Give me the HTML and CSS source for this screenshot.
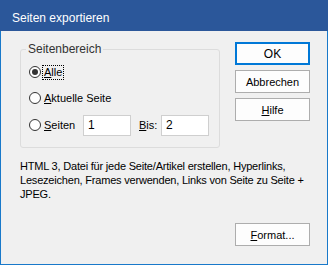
FILE: index.html
```html
<!DOCTYPE html>
<html lang="de">
<head>
  <meta charset="UTF-8" />
  <meta name="viewport" content="width=device-width, initial-scale=1" />
  <title>Seiten exportieren</title>
  <link rel="stylesheet" href="styles.css">
</head>
<body>

  <div class="window">
    <div class="titlebar">Seiten exportieren</div>

    <div class="content">
      <div class="top">
        <fieldset class="range">
          <legend>Seitenbereich</legend>
          <div class="rows">
            <label class="row">
              <span class="radio checked"></span>
              <span class="focus"><u>A</u>lle</span>
            </label>
            <label class="row">
              <span class="radio"></span>
              <span class="text"><u>A</u>ktuelle Seite</span>
            </label>
            <div class="row pages">
              <label class="pages-label">
                <span class="radio"></span>
                <span class="text"><u>S</u>eiten</span>
              </label>
              <input type="text" class="field" value="1">
              <span class="bis"><u>B</u>is:</span>
              <input type="text" class="field" value="2">
            </div>
          </div>
        </fieldset>

        <div class="buttons">
          <button class="default">OK</button>
          <button>Abbrechen</button>
          <button><u>H</u>ilfe</button>
        </div>
      </div>

      <p class="desc">HTML 3, Datei für jede Seite/Artikel erstellen, Hyperlinks, Lesezeichen, Frames verwenden, Links von Seite zu Seite + JPEG.</p>

      <div class="footer">
        <button><u>F</u>ormat...</button>
      </div>
    </div>
  </div>

</body>
</html>
```

FILE: styles.css
```css
* {
  box-sizing: border-box;
}
body {
  margin: 0;
  font-family: "Liberation Sans", Arial, sans-serif;
  font-size: 11px;
  color: #000;
  background: #f0f0f0;
}
.window {
  width: 328px;
  height: 265px;
  display: flex;
  flex-direction: column;
  background: #f0f0f0;
  border: 1px solid #1979ca;
  border-top: none;
}
.titlebar {
  height: 31px;
  margin: 0 -1px;
  padding: 6px 0 0 12px;
  line-height: 25px;
  font-size: 12px;
  background: #2b579a;
  color: #fff;
}
.content {
  flex: 1;
  display: flex;
  flex-direction: column;
  padding: 11px 17px 18px 19px;
}
.top {
  display: flex;
  gap: 15px;
}
.range {
  width: 200px;
  min-width: 0;
  margin: 0;
  padding: 0;
  border: 1px solid #dcdcdc;
  border-radius: 3px;
}
.range legend {
  margin-left: 5px;
  padding: 0 2px;
  line-height: 14px;
  font-size: 12px;
  color: #333;
}
.rows {
  padding: 3px 0 8px 8px;
}
.row {
  display: flex;
  align-items: center;
  height: 26px;
}
.row.pages {
  height: 28px;
}
.pages-label {
  display: flex;
  align-items: center;
  width: 54px;
}
.radio {
  width: 12px;
  height: 12px;
  margin-right: 1px;
  border: 1px solid #333;
  border-radius: 50%;
  background: #fff;
  display: flex;
  align-items: center;
  justify-content: center;
}
.radio.checked::after {
  content: "";
  width: 6px;
  height: 6px;
  border-radius: 50%;
  background: #333;
}
.focus {
  border: 1px dotted #000;
  padding: 0 1px;
  line-height: 13px;
}
.text {
  padding-left: 2px;
}
.field {
  width: 48px;
  height: 21px;
  padding: 0 0 0 4px;
  border: 1px solid #cfcfcf;
  background: #fff;
  font-family: inherit;
  font-size: 12px;
  color: #000;
}
.bis {
  width: 22px;
  margin-left: 8px;
}
.buttons {
  display: flex;
  flex-direction: column;
  gap: 5px;
}
button {
  width: 75px;
  height: 23px;
  padding: 0;
  border: 1px solid #adadad;
  background: #fdfdfd;
  font: inherit;
  color: #000;
}
button.default {
  border: 2px solid #0078d7;
  font-size: 12px;
}
.desc {
  margin: 11px 0 0;
  line-height: 14px;
  letter-spacing: -0.2px;
}
.footer {
  margin-top: auto;
  display: flex;
  justify-content: flex-end;
}
```
